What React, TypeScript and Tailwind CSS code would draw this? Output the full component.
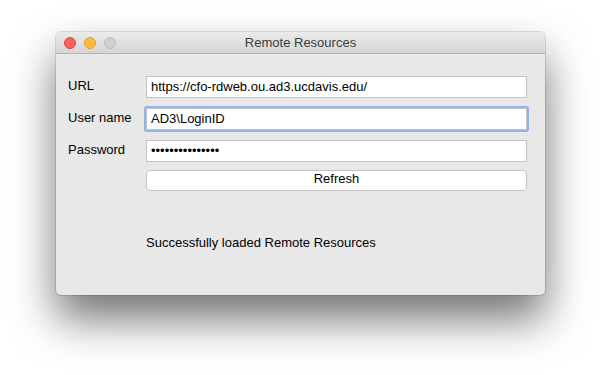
export default function App() {
  const font = { fontFamily: '"Liberation Sans", Arial, sans-serif' };
  return (
    <div className="w-[601px] h-[375px] bg-white pt-[32px] pl-[56px]" style={font}>
      <div className="w-[489px] h-[263px] rounded-[5px] bg-[#e8e8e8] flex flex-col overflow-hidden shadow-[0_0_0_1px_rgba(0,0,0,0.12),0_24px_44px_rgba(0,0,0,0.55)]">
        <div className="h-[22px] flex items-center relative bg-gradient-to-b from-[#ebebeb] to-[#d5d5d5] border-b border-[#b4b4b4]">
          <div className="flex items-center gap-[8px] pl-[8px]">
            <div className="w-[12px] h-[12px] rounded-full bg-[#fc605c] border border-[#e0443e]" />
            <div className="w-[12px] h-[12px] rounded-full bg-[#fdbc40] border border-[#dea123]" />
            <div className="w-[12px] h-[12px] rounded-full bg-[#d0d0d0] border border-[#bdbdbd]" />
          </div>
          <div className="absolute inset-0 flex items-center justify-center text-[13px] text-[#3c3c3c]">Remote Resources</div>
        </div>
        <div className="flex flex-col pt-[22px] pl-[12px] text-[13px] text-black">
          <div className="flex items-center h-[22px]">
            <div className="w-[78px] -mt-[2px]">URL</div>
            <div className="w-[381px] h-[22px] bg-white border border-[#c3c3c3] flex items-center px-[4px]">https://cfo-rdweb.ou.ad3.ucdavis.edu/</div>
          </div>
          <div className="flex items-center h-[22px] mt-[10px]">
            <div className="w-[78px] -mt-[2px]">User name</div>
            <div className="w-[381px] h-[22px] bg-white border border-[#c3c3c3] flex items-center px-[4px] shadow-[0_0_0_2px_#8fb5ef] rounded-[1px]">AD3\LoginID</div>
          </div>
          <div className="flex items-center h-[22px] mt-[10px]">
            <div className="w-[78px] -mt-[2px]">Password</div>
            <div className="w-[381px] h-[22px] bg-white border border-[#c3c3c3] flex items-center px-[4px] text-[13px]">•••••••••••••••</div>
          </div>
          <div className="flex items-center h-[21px] mt-[8px]">
            <div className="w-[78px]" />
            <div className="w-[381px] h-[21px] bg-white border border-[#c3c3c3] rounded-[4px] flex items-center justify-center pb-[3px]">Refresh</div>
          </div>
          <div className="flex mt-[42px]">
            <div className="w-[78px]" />
            <div>Successfully loaded Remote Resources</div>
          </div>
        </div>
      </div>
    </div>
  );
}
